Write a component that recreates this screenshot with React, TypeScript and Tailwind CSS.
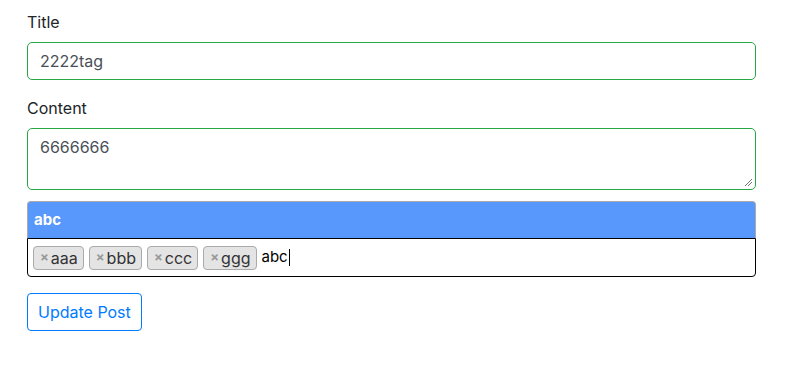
const font = "font-['Inter','Liberation_Sans',sans-serif]";

const Tag = ({ text }: { text: string }) => (
  <span className="flex h-[24px] items-center rounded-[4px] border border-[#aaaaaa] bg-[#e4e4e4] pl-[6px] pr-[5px] text-[16px] leading-none text-[#333]">
    <span className="mr-[2px] text-[13px] font-bold text-[#999]">×</span>
    {text}
  </span>
);

export default function App() {
  return (
    <div className={`${font} min-h-screen bg-white px-[27px] pt-[12px] text-[#212529]`}>
      <div className="w-[729px]">
        <label className="block text-[16px] leading-[20px]">Title</label>
        <div className="mt-[10px] flex h-[38px] items-center rounded-[5px] border border-[#28a745] px-[12px] text-[16px] text-[#495057]">
          2222tag
        </div>

        <label className="mt-[18px] block text-[16px] leading-[20px]">Content</label>
        <div className="relative mt-[10px] h-[62px] rounded-[5px] border border-[#28a745] px-[12px] pt-[7px] text-[16px] leading-[22px] text-[#495057]">
          6666666
          <svg className="absolute bottom-[2px] right-[2px]" width="9" height="9" viewBox="0 0 9 9">
            <path d="M1 8 L8 1 M4 8 L8 4" stroke="#777" strokeWidth="1" />
          </svg>
        </div>

        <div className="mt-[11px]">
          <div className="flex h-[37px] items-center rounded-t-[4px] border border-b-0 border-[#aaaaaa] bg-[#5897fb] px-[6px] text-[15px] font-bold text-white">
            abc
          </div>
          <div className="flex h-[39px] items-center gap-[5px] rounded-b-[4px] border border-black px-[5px]">
            <Tag text="aaa" />
            <Tag text="bbb" />
            <Tag text="ccc" />
            <Tag text="ggg" />
            <span className="flex items-center text-[15px] text-black">
              abc
              <span className="ml-[1px] inline-block h-[17px] w-[1px] bg-black" />
            </span>
          </div>
        </div>

        <button className="mt-[16px] flex h-[38px] items-center rounded-[4px] border border-[#007bff] px-[10px] text-[16px] text-[#007bff]">
          Update Post
        </button>
      </div>
    </div>
  );
}
